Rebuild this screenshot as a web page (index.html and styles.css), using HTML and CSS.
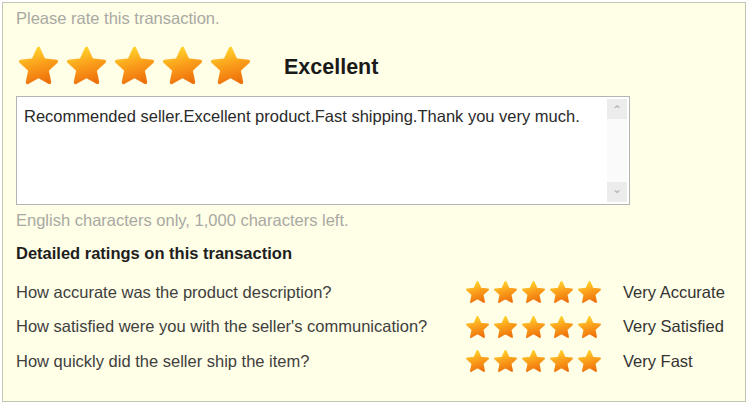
FILE: index.html
```html
<!DOCTYPE html>
<html>
<head>
<meta charset="utf-8">
<link rel="stylesheet" href="styles.css">
</head>
<body>
<svg class="defs" width="0" height="0" aria-hidden="true">
  <defs>
    <linearGradient id="sg" x1="0.3" y1="0" x2="0.6" y2="1">
      <stop offset="0" stop-color="#ffd52c"/>
      <stop offset="0.45" stop-color="#fba21c"/>
      <stop offset="1" stop-color="#ee720c"/>
    </linearGradient>
    <symbol id="star" viewBox="0 2 100 96">
      <polygon points="50,10 62.34,37.01 91.85,40.4 69.97,60.49 75.86,89.6 50,75 24.14,89.6 30.03,60.49 8.15,40.4 37.66,37.01" fill="url(#sg)" stroke="url(#sg)" stroke-width="8" stroke-linejoin="round"/>
    </symbol>
  </defs>
</svg>
<div class="panel">
  <div class="prompt">Please rate this transaction.</div>
  <div class="overall">
    <div class="stars big">
      <svg><use href="#star"/></svg>
      <svg><use href="#star"/></svg>
      <svg><use href="#star"/></svg>
      <svg><use href="#star"/></svg>
      <svg><use href="#star"/></svg>
    </div>
    <div class="verdict">Excellent</div>
  </div>
  <div class="box">
    <div class="box-text">Recommended seller.Excellent product.Fast shipping.Thank you very much.</div>
    <div class="scroll">
      <div class="arrow">&#8963;</div>
      <div class="track"></div>
      <div class="arrow down">&#8964;</div>
    </div>
  </div>
  <div class="hint">English characters only, 1,000 characters left.</div>
  <div class="heading">Detailed ratings on this transaction</div>
  <div class="rows">
    <div class="row">
      <div class="q">How accurate was the product description?</div>
      <div class="stars small">
        <svg><use href="#star"/></svg><svg><use href="#star"/></svg><svg><use href="#star"/></svg><svg><use href="#star"/></svg><svg><use href="#star"/></svg>
      </div>
      <div class="label">Very Accurate</div>
    </div>
    <div class="row">
      <div class="q">How satisfied were you with the seller's communication?</div>
      <div class="stars small">
        <svg><use href="#star"/></svg><svg><use href="#star"/></svg><svg><use href="#star"/></svg><svg><use href="#star"/></svg><svg><use href="#star"/></svg>
      </div>
      <div class="label">Very Satisfied</div>
    </div>
    <div class="row">
      <div class="q">How quickly did the seller ship the item?</div>
      <div class="stars small">
        <svg><use href="#star"/></svg><svg><use href="#star"/></svg><svg><use href="#star"/></svg><svg><use href="#star"/></svg><svg><use href="#star"/></svg>
      </div>
      <div class="label">Very Fast</div>
    </div>
  </div>
</div>
</body>
</html>
```
FILE: styles.css
```css
html, body {
  margin: 0;
  padding: 0;
  background: #ffffff;
}
body {
  font-family: "Liberation Sans", Arial, sans-serif;
  font-size: 16.5px;
  color: #333333;
}
.defs {
  display: block;
  width: 0;
  height: 0;
  overflow: hidden;
}
.panel {
  box-sizing: border-box;
  margin: 2px 0 0 2px;
  width: 744px;
  height: 400px;
  border: 1px solid #c4c4b4;
  background: #fffee6;
  padding: 6px 0 0 13px;
}
.prompt {
  line-height: 18px;
  color: #a9a9a4;
}
.overall {
  display: flex;
  align-items: center;
  margin-top: 16px;
  height: 44px;
}
.stars {
  display: flex;
}
.stars.big {
  gap: 5px;
  margin-left: 1px;
}
.stars.big svg {
  width: 43px;
  height: 41px;
}
.verdict {
  margin-left: 32px;
  font-size: 21.5px;
  font-weight: bold;
  color: #1a1a1a;
  padding-top: 4px;
}
.box {
  display: flex;
  margin-top: 9px;
  width: 614px;
  height: 109px;
  box-sizing: border-box;
  border: 1px solid #b4b4b4;
  background: #ffffff;
}
.box-text {
  flex: 1;
  padding: 10px 0 0 7px;
  line-height: 18px;
  color: #2a2a2a;
}
.scroll {
  width: 20px;
  margin: 2px 2px 2px 0;
  display: flex;
  flex-direction: column;
  background: #fafafa;
}
.arrow {
  height: 20px;
  background: #ececec;
  color: #b0b0b0;
  font-size: 12px;
  line-height: 22px;
  text-align: center;
}
.arrow.down {
  line-height: 14px;
}
.track {
  flex: 1;
}
.hint {
  margin-top: 6px;
  line-height: 18px;
  color: #a9a9a4;
}
.heading {
  margin-top: 15px;
  line-height: 18px;
  font-weight: bold;
  color: #1e1e1e;
}
.rows {
  margin-top: 13px;
}
.row {
  display: flex;
  align-items: center;
  height: 34.5px;
}
.q {
  width: 449px;
  color: #404040;
}
.stars.small {
  gap: 3px;
}
.stars.small svg {
  width: 25px;
  height: 24px;
}
.label {
  margin-left: 21px;
  color: #333333;
}
```
